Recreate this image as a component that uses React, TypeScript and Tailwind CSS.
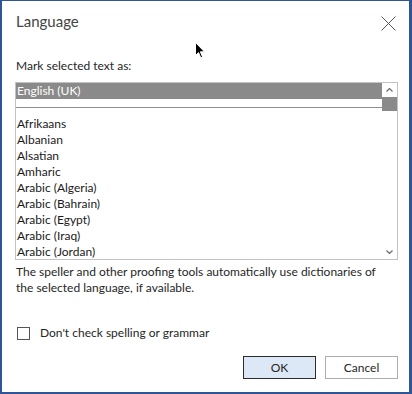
const languages = [
  "Afrikaans",
  "Albanian",
  "Alsatian",
  "Amharic",
  "Arabic (Algeria)",
  "Arabic (Bahrain)",
  "Arabic (Egypt)",
  "Arabic (Iraq)",
  "Arabic (Jordan)",
];

function Chevron({ down }: { down?: boolean }) {
  return (
    <svg width="7" height="4" viewBox="0 0 7 4" className={down ? "rotate-180" : ""}>
      <path d="M0.5 3.5 L3.5 0.5 L6.5 3.5" fill="none" stroke="#6b6b6b" strokeWidth="1.2" />
    </svg>
  );
}

export default function App() {
  return (
    <div
      className="relative h-[394px] w-[412px] overflow-hidden border-t border-b-2 border-l-2 border-r-[3px] border-[#2f5597] bg-white text-[12px] text-[#262626]"
      style={{ fontFamily: '"Segoe UI", "Lato", sans-serif' }}
    >
      {/* header */}
      <div className="mt-[10px] flex h-[20px] items-center justify-between pl-[14px] pr-[13px]">
        <h1 className="text-[15px] leading-[20px] text-[#444]">Language</h1>
        <svg width="15" height="15" viewBox="0 0 15 15" className="mt-[4px]">
          <path d="M0.5 0.5 L14.5 14.5 M14.5 0.5 L0.5 14.5" stroke="#555" strokeWidth="1" />
        </svg>
      </div>

      <p className="mt-[27px] pl-[14px] leading-[16px]">Mark selected text as:</p>

      {/* list box */}
      <div className="ml-[13px] mt-[8px] flex h-[178px] w-[383px] overflow-hidden border border-[#c3c3c3]">
        <ul className="flex-1 overflow-hidden text-[#1a1a1a]">
          <li className="h-[16px] bg-[#8a8a8a] pl-[1px] leading-[16px] text-white">English (UK)</li>
          <li className="h-[17px] pt-[8px]">
            <div className="h-px bg-[#8f8f8f]" />
          </li>
          {languages.map((lang) => (
            <li key={lang} className="h-[16px] pl-[1px] leading-[16px]">
              {lang}
            </li>
          ))}
        </ul>
        <div className="flex w-[15px] flex-col">
          <div className="flex h-[14px] items-center justify-center">
            <Chevron />
          </div>
          <div className="h-[14px] bg-[#8a8a8a]" />
          <div className="flex-1" />
          <div className="flex h-[14px] items-center justify-center">
            <Chevron down />
          </div>
        </div>
      </div>

      <p className="mt-[4px] pl-[14px] leading-[16px]">
        The speller and other proofing tools automatically use dictionaries of
        <br />
        the selected language, if available.
      </p>

      <label className="mt-[29px] flex h-[16px] items-center pl-[15px]">
        <span className="h-[13px] w-[13px] border border-[#555]" />
        <span className="ml-[10px] leading-[16px]">Don't check spelling or grammar</span>
      </label>

      <div className="mt-[15px] flex justify-end gap-[9px] pr-[11px]">
        <button className="h-[23px] w-[73px] border border-[#2b2b2b] bg-[#dde8f6] text-[12px] text-[#262626]">
          OK
        </button>
        <button className="h-[23px] w-[73px] border border-[#adadad] bg-white text-[12px] text-[#262626]">
          Cancel
        </button>
      </div>

      {/* mouse pointer */}
      <svg
        width="11"
        height="18"
        viewBox="0 0 11 18"
        className="absolute left-[193px] top-[41px]"
      >
        <path
          d="M0.5 0.5 L0.5 13.5 L3.5 10.5 L5.8 15.8 L7.6 15 L5.4 9.8 L9.5 9.8 Z"
          fill="#000"
          stroke="#fff"
          strokeWidth="1"
        />
      </svg>
    </div>
  );
}
